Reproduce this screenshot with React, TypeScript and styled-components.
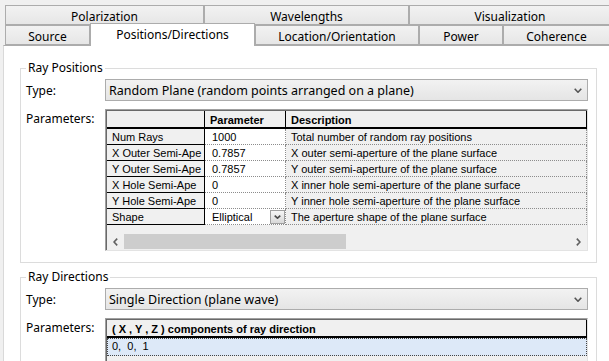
import * as React from "react";
import styled, { createGlobalStyle, css } from "styled-components";

const GlobalStyle = createGlobalStyle`
  html, body {
    margin: 0;
    padding: 0;
    background: #f0f0f0;
  }
  body {
    font-family: "Noto Sans", "Open Sans", sans-serif;
    font-size: 12px;
    color: #000;
  }
`;

const Window = styled.div`
  width: 609px;
  height: 361px;
  overflow: hidden;
  box-sizing: border-box;
  padding-top: 5px;
  background: #f0f0f0;
`;

const TabRow = styled.div<{ $cols: string }>`
  display: grid;
  grid-template-columns: ${(p) => p.$cols};
  margin-left: 5px;
  height: 20px;
`;

const Tab = styled.div<{ $active?: boolean }>`
  box-sizing: border-box;
  height: 20px;
  border: 1px solid #acacac;
  background: linear-gradient(#f2f2f2, #e6e6e6);
  display: flex;
  align-items: center;
  justify-content: center;
  padding-top: 3px;
  line-height: 16px;
  white-space: nowrap;

  ${(p) =>
    p.$active &&
    css`
      position: relative;
      z-index: 1;
      margin-top: -2px;
      height: 23px;
      border-bottom: none;
      background: #fff;
      padding-top: 0;
    `}
`;

const Panel = styled.div`
  margin-left: 3px;
  height: 330px;
  box-sizing: border-box;
  background: #fff;
  border-top: 1px solid #acacac;
  border-left: 1px solid #d9d9d9;
  padding: 14px 0 0 16px;
  display: flex;
  flex-direction: column;
  gap: 6px;
`;

const Group = styled.fieldset<{ $height?: number }>`
  margin: 0;
  min-width: 0;
  width: 577px;
  box-sizing: border-box;
  border: 1px solid #dcdcdc;
  padding: 0 8px 11px 5px;
  ${(p) => p.$height && `height: ${p.$height}px;`}
`;

const GroupTitle = styled.legend`
  padding: 0 2px;
  margin-left: 0;
  line-height: 16px;
`;

const Form = styled.div`
  display: grid;
  grid-template-columns: 79px 1fr;
  row-gap: 8px;
  margin-top: 3px;
`;

const Label = styled.div<{ $top?: boolean }>`
  line-height: 16px;
  align-self: ${(p) => (p.$top ? "start" : "center")};
  padding-top: ${(p) => (p.$top ? "2px" : "1px")};
`;

const Combo = styled.div`
  height: 22px;
  box-sizing: border-box;
  border: 1px solid #acacac;
  background: linear-gradient(#f2f2f2, #e5e5e5);
  display: flex;
  align-items: center;
  justify-content: space-between;
  padding: 1px 5px 0 3px;
  font-size: 12.5px;
  white-space: nowrap;
`;

const TableFrame = styled.div<{ $minHeight?: number }>`
  border-style: solid;
  border-width: 1px;
  border-color: #a0a0a0 #e3e3e3 #e3e3e3 #a0a0a0;
  ${(p) => p.$minHeight && `min-height: ${p.$minHeight}px;`}
  display: flex;
  flex-direction: column;
`;

const Viewport = styled.div`
  flex: 1;
  border-top: 1px solid #696969;
  border-left: 1px solid #696969;
  background: #f0f0f0;
  display: flex;
  flex-direction: column;
  font-family: "Liberation Sans", Arial, sans-serif;
  font-size: 11px;
`;

const Grid = styled.div<{ $cols: string }>`
  display: grid;
  grid-template-columns: ${(p) => p.$cols};
`;

const HeadCell = styled.div`
  height: 18px;
  box-sizing: border-box;
  background: #f0f0f0;
  border-right: 1px solid #000;
  border-bottom: 2px solid #000;
  font-weight: bold;
  padding: 1px 0 0 5px;
  line-height: 16px;
  white-space: nowrap;
`;

const RowHead = styled.div`
  height: 16px;
  box-sizing: border-box;
  background: #f0f0f0;
  border-right: 1px solid #000;
  border-bottom: 1px solid #000;
  padding: 1px 0 0 5px;
  line-height: 15px;
  white-space: nowrap;
  overflow: hidden;
`;

const Cell = styled.div<{ $pad: number; $bg: string }>`
  height: 16px;
  box-sizing: border-box;
  background: ${(p) => p.$bg};
  border-right: 1px dotted #8c8c8c;
  border-bottom: 1px dotted #8c8c8c;
  padding-left: ${(p) => p.$pad}px;
  line-height: 15px;
  white-space: nowrap;
  overflow: hidden;
  display: flex;
  align-items: center;
  justify-content: space-between;
`;

const CellText = styled.span`
  padding-top: 1px;
`;

const SelectedRow = styled.div`
  height: 18px;
  box-sizing: border-box;
  background: #dde9f8;
  border: 1px dotted #444;
  padding-left: 4px;
  line-height: 15px;
  white-space: pre;
`;

const CellButton = styled.div`
  width: 15px;
  height: 14px;
  box-sizing: border-box;
  border: 1px solid #a0a0a0;
  background: linear-gradient(#f6f6f6, #d8d8d8);
  display: flex;
  align-items: center;
  justify-content: center;
`;

const Spacer = styled.div`
  height: 8px;
`;

const HScroll = styled.div`
  height: 17px;
  display: flex;
  background: #f0f0f0;
`;

const ScrollArrow = styled.div`
  width: 17px;
  display: flex;
  align-items: center;
  justify-content: center;
`;

const ScrollTrack = styled.div`
  flex: 1;
  padding: 1px 0;
  display: flex;
`;

const ScrollThumb = styled.div`
  width: 222px;
  background: #cdcdcd;
`;

const Chevron = ({ w = 8, h = 5, color = "#555" }: { w?: number; h?: number; color?: string }) => (
  <svg width={w} height={h} viewBox={`0 0 ${w} ${h}`}>
    <path d={`M0.7 0.7 L${w / 2} ${h - 0.8} L${w - 0.7} 0.7`} fill="none" stroke={color} strokeWidth="1.6" />
  </svg>
);

const Arrow = ({ dir }: { dir: "left" | "right" }) => (
  <svg width="5" height="8" viewBox="0 0 5 8">
    <path
      d={dir === "left" ? "M4.2 0.6 L1 4 L4.2 7.4" : "M0.8 0.6 L4 4 L0.8 7.4"}
      fill="none"
      stroke="#606060"
      strokeWidth="1.6"
    />
  </svg>
);

const rows = [
  ["Num Rays", "1000", "Total number of random ray positions"],
  ["X Outer Semi-Ape", "0.7857", "X outer semi-aperture of the plane surface"],
  ["Y Outer Semi-Ape", "0.7857", "Y outer semi-aperture of the plane surface"],
  ["X Hole Semi-Ape", "0", "X inner hole semi-aperture of the plane surface"],
  ["Y Hole Semi-Ape", "0", "Y inner hole semi-aperture of the plane surface"],
  ["Shape", "Elliptical", "The aperture shape of the plane surface"],
];

const App = () => {
  return (
    <Window>
      <GlobalStyle />
      <TabRow $cols="199px 205px 202px">
        <Tab>Polarization</Tab>
        <Tab>Wavelengths</Tab>
        <Tab>Visualization</Tab>
      </TabRow>
      <TabRow $cols="85px 165px 164px 84px 107px">
        <Tab>Source</Tab>
        <Tab $active>Positions/Directions</Tab>
        <Tab>Location/Orientation</Tab>
        <Tab>Power</Tab>
        <Tab>Coherence</Tab>
      </TabRow>
      <Panel>
        <Group>
          <GroupTitle>Ray Positions</GroupTitle>
          <Form>
            <Label>Type:</Label>
            <Combo>
              <span>Random Plane (random points arranged on a plane)</span>
              <Chevron />
            </Combo>
            <Label $top>Parameters:</Label>
            <TableFrame>
              <Viewport>
                <Grid $cols="98px 81px 1fr">
                  <HeadCell />
                  <HeadCell>Parameter</HeadCell>
                  <HeadCell>Description</HeadCell>
                  {rows.map(([name, value, desc]) => (
                    <React.Fragment key={name}>
                      <RowHead>{name}</RowHead>
                      <Cell $pad={7} $bg="#fff">
                        <CellText>{value}</CellText>
                        {name === "Shape" && (
                          <CellButton>
                            <Chevron w={7} h={4} color="#4a4a4a" />
                          </CellButton>
                        )}
                      </Cell>
                      <Cell $pad={5} $bg="#f0f0f0">
                        <CellText>{desc}</CellText>
                      </Cell>
                    </React.Fragment>
                  ))}
                </Grid>
                <Spacer />
                <HScroll>
                  <ScrollArrow>
                    <Arrow dir="left" />
                  </ScrollArrow>
                  <ScrollTrack>
                    <ScrollThumb />
                  </ScrollTrack>
                  <ScrollArrow>
                    <Arrow dir="right" />
                  </ScrollArrow>
                </HScroll>
              </Viewport>
            </TableFrame>
          </Form>
        </Group>
        <Group $height={140}>
          <GroupTitle>Ray Directions</GroupTitle>
          <Form>
            <Label>Type:</Label>
            <Combo>
              <span>Single Direction (plane wave)</span>
              <Chevron />
            </Combo>
            <Label $top>Parameters:</Label>
            <TableFrame $minHeight={80}>
              <Viewport>
                <Grid $cols="1fr">
                  <HeadCell>( X , Y , Z ) components of ray direction</HeadCell>
                  <SelectedRow>{"0,  0,  1"}</SelectedRow>
                </Grid>
              </Viewport>
            </TableFrame>
          </Form>
        </Group>
      </Panel>
    </Window>
  );
};

export default App;
